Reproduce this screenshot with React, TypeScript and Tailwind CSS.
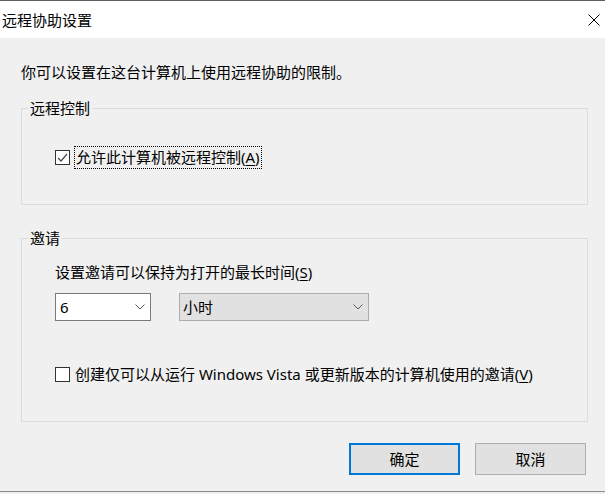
import React from 'react';

function Chevron() {
  return (
    <svg width="10" height="6" viewBox="0 0 10 6" className="shrink-0">
      <polyline points="0.5,0.5 5,5 9.5,0.5" fill="none" stroke="#5a5a5a" strokeWidth="1" />
    </svg>
  );
}

function CheckBox({ checked }: { checked?: boolean }) {
  return (
    <div className="w-[15px] h-[15px] shrink-0 border border-[#333333] bg-white">
      {checked && (
        <svg width="13" height="13" viewBox="0 0 13 13">
          <polyline points="2,7 5,10 11,3" fill="none" stroke="#4a4a4a" strokeWidth="1.2" />
        </svg>
      )}
    </div>
  );
}

function GroupBox({ title, className, children }: { title: string; className: string; children: React.ReactNode }) {
  return (
    <div className={`relative border border-[#dcdcdc] ${className}`}>
      <span className="absolute left-[6px] top-[-11px] px-[2px] bg-[#f0f0f0] leading-[20px]">{title}</span>
      {children}
    </div>
  );
}

export default function App() {
  return (
    <div className="w-[605px] h-[494px] bg-[#f0f0f0] font-['Noto_Sans','Noto_Sans_CJK_SC',sans-serif] text-[15px] text-black">
      <div className="h-[492px] flex flex-col border-t border-b border-t-[#5f5f5f] border-b-[#8a8a8a]">
        {/* title bar */}
        <div className="h-[37px] bg-white flex items-center justify-between pl-[2px] pr-[5px]">
          <span className="leading-[20px]">远程协助设置</span>
          <svg width="12" height="12" viewBox="0 0 12 12">
            <line x1="0.5" y1="0.5" x2="11.5" y2="11.5" stroke="#000" strokeWidth="1" />
            <line x1="11.5" y1="0.5" x2="0.5" y2="11.5" stroke="#000" strokeWidth="1" />
          </svg>
        </div>

        <div className="flex flex-col pl-[21px] pr-[17px]">
          <p className="mt-[24px] leading-[20px]">你可以设置在这台计算机上使用远程协助的限制。</p>

          <GroupBox title="远程控制" className="mt-[26px] h-[97px] pt-[37px] pl-[33px]">
            <div className="flex items-center">
              <CheckBox checked />
              <span className="ml-[4px] border border-dotted border-black px-[1px] leading-[21px]">
                允许此计算机被远程控制(<u className="underline-offset-2">A</u>)
              </span>
            </div>
          </GroupBox>

          <GroupBox title="邀请" className="mt-[33px] h-[184px] pt-[23px] pl-[33px]">
            <p className="leading-[20px]">
              设置邀请可以保持为打开的最长时间(<u className="underline-offset-2">S</u>)
            </p>
            <div className="mt-[11px] flex gap-[28px]">
              <div className="w-[96px] h-[28px] bg-white border border-[#7a7a7a] flex items-center justify-between pl-[4px] pr-[5px]">
                <span className="leading-[20px]">6</span>
                <Chevron />
              </div>
              <div className="w-[190px] h-[28px] bg-[#e1e1e1] border border-[#adadad] flex items-center justify-between pl-[3px] pr-[5px]">
                <span className="leading-[20px]">小时</span>
                <Chevron />
              </div>
            </div>
            <div className="mt-[43px] h-[20px] flex items-center">
              <CheckBox />
              <span className="ml-[5px] leading-[20px]">
                创建仅可以从运行 Windows Vista 或更新版本的计算机使用的邀请(<u className="underline-offset-2">V</u>)
              </span>
            </div>
          </GroupBox>

          <div className="mt-[21px] pr-[2px] flex justify-end gap-[15px]">
            <button className="w-[111px] h-[32px] bg-[#e1e1e1] border-2 border-[#0078d7] leading-[20px]">确定</button>
            <button className="w-[111px] h-[32px] bg-[#e1e1e1] border border-[#adadad] leading-[20px]">取消</button>
          </div>
        </div>
      </div>
    </div>
  );
}
